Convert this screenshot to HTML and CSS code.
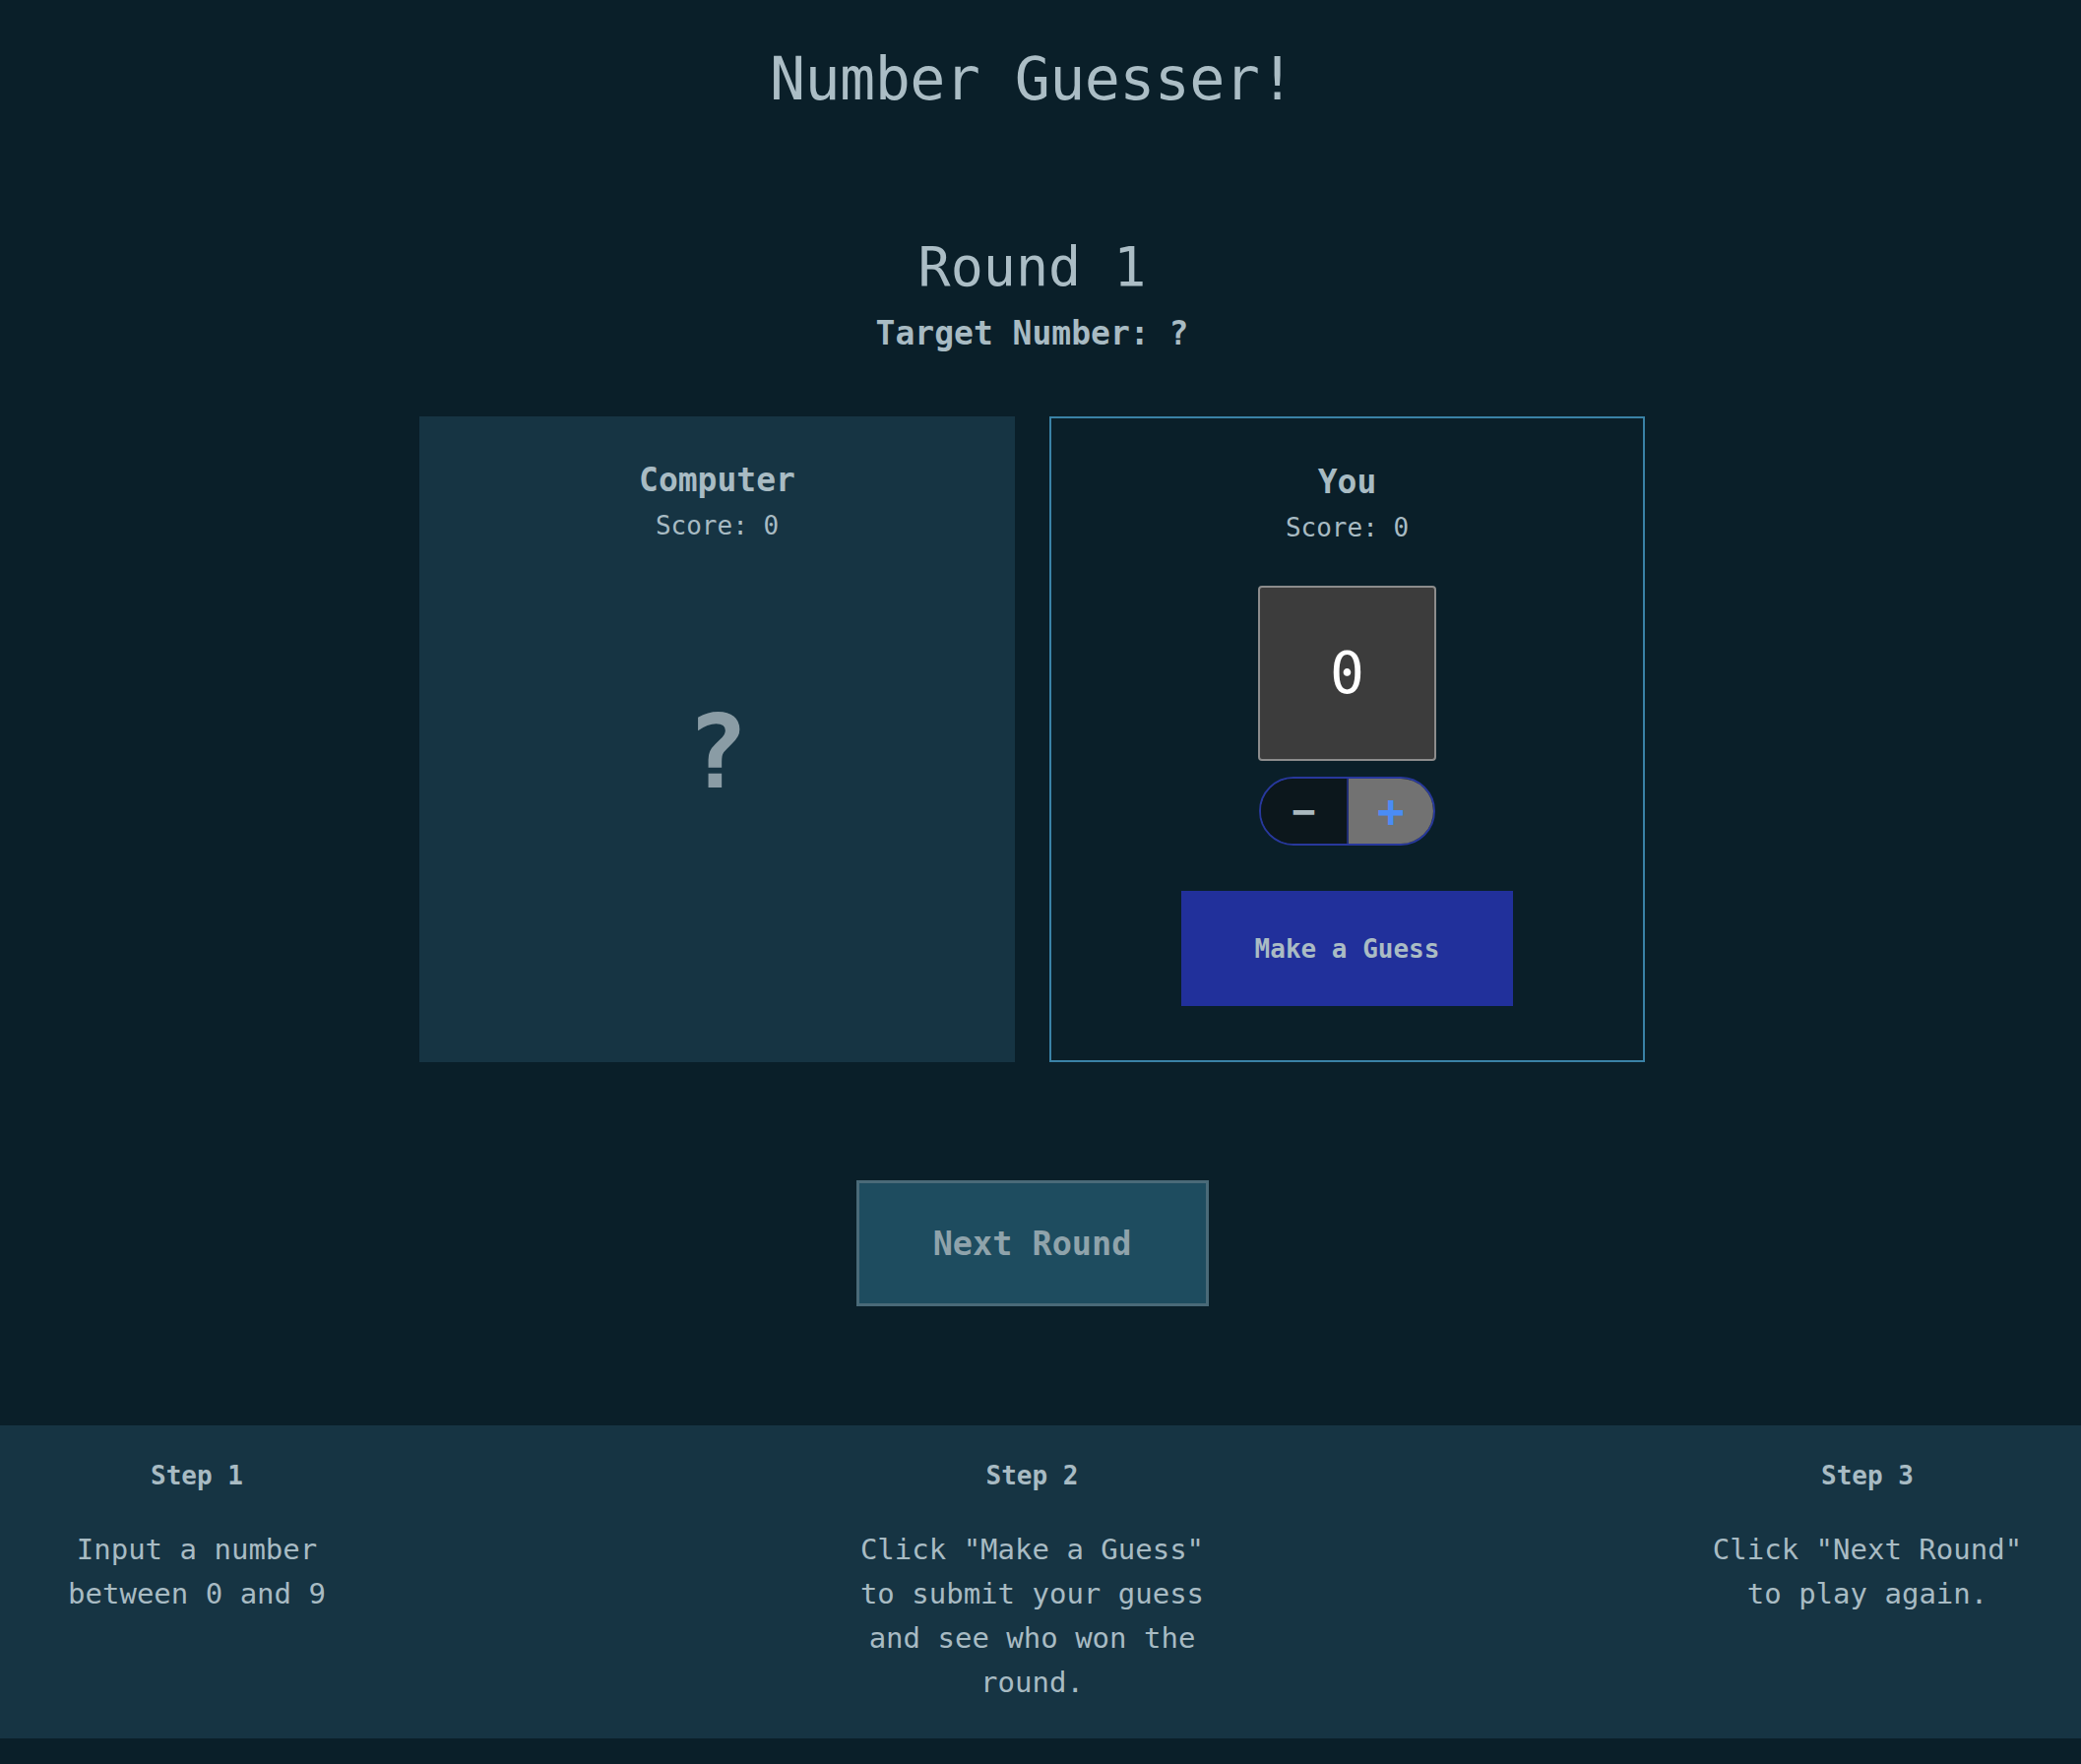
FILE: index.html
```html
<!DOCTYPE html>
<html lang="en">
<head>
<meta charset="utf-8">
<title>Number Guesser!</title>
<link rel="stylesheet" href="styles.css">
</head>
<body>
<main class="main">
  <h1 class="title">Number Guesser!</h1>
  <h2 class="round">Round 1</h2>
  <p class="target">Target Number: ?</p>

  <section class="board">
    <div class="card card-computer">
      <h3 class="player">Computer</h3>
      <p class="score">Score: 0</p>
      <div class="computer-guess">?</div>
    </div>
    <div class="card card-you">
      <h3 class="player">You</h3>
      <p class="score">Score: 0</p>
      <input class="guess-input" type="number" min="0" max="9" value="0">
      <div class="stepper">
        <button class="step-btn step-minus" type="button">−</button>
        <button class="step-btn step-plus" type="button">+</button>
      </div>
      <button class="guess-btn" type="button">Make a Guess</button>
    </div>
  </section>

  <button class="next-btn" type="button">Next Round</button>
</main>

<footer class="footer">
  <div class="steps">
    <div class="step">
      <h4 class="step-title">Step 1</h4>
      <p class="step-text">Input a number between 0 and 9</p>
    </div>
    <div class="step">
      <h4 class="step-title">Step 2</h4>
      <p class="step-text">Click "Make a Guess" to submit your guess and see who won the round.</p>
    </div>
    <div class="step">
      <h4 class="step-title">Step 3</h4>
      <p class="step-text">Click "Next Round" to play again.</p>
    </div>
  </div>
</footer>
</body>
</html>
```

FILE: styles.css
```css
* {
  box-sizing: border-box;
}

body {
  margin: 0;
  background: #0a1f29;
  color: #a8bbc3;
  font-family: "DejaVu Sans Mono", "Liberation Mono", monospace;
}

.main {
  padding-right: 17px;
  display: flex;
  flex-direction: column;
  align-items: center;
  text-align: center;
}

.title {
  margin: 45px 0 0;
  font-size: 60px;
  line-height: 70px;
  font-weight: normal;
  letter-spacing: -0.6px;
  color: #abbdc5;
}

.round {
  margin: 124px 0 0;
  font-size: 55px;
  line-height: 64px;
  font-weight: normal;
  color: #abbdc5;
}

.target {
  margin: 16px 0 0;
  font-size: 33px;
  line-height: 40px;
  font-weight: bold;
}

.board {
  margin-top: 64px;
  display: flex;
  gap: 35px;
}

.card {
  width: 605px;
  height: 656px;
  display: flex;
  flex-direction: column;
  align-items: center;
  padding-top: 45px;
}

.card-computer {
  background: #163443;
}

.card-you {
  border: 2px solid #3a82a6;
  padding-top: 45px;
}

.player {
  margin: 0;
  font-size: 33px;
  line-height: 40px;
  font-weight: bold;
}

.score {
  margin: 10px 0 0;
  font-size: 26px;
  line-height: 32px;
}

.computer-guess {
  margin-top: 159px;
  font-size: 104px;
  line-height: 110px;
  font-weight: bold;
  color: #8a9ca5;
}

.guess-input {
  margin-top: 43px;
  width: 181px;
  height: 178px;
  background: #3c3c3c;
  border: 2px solid #8c8c8c;
  border-radius: 4px;
  color: #ffffff;
  font-family: "DejaVu Sans Mono", monospace;
  font-size: 58px;
  text-align: center;
  padding: 0;
  -moz-appearance: textfield;
}

.guess-input::-webkit-inner-spin-button,
.guess-input::-webkit-outer-spin-button {
  -webkit-appearance: none;
  margin: 0;
}

.stepper {
  margin-top: 16px;
  width: 179px;
  height: 70px;
  display: flex;
  border: 2px solid #28389c;
  border-radius: 35px;
  overflow: hidden;
}

.step-btn {
  flex: 1;
  border: 0;
  margin: 0;
  padding: 0;
  font-family: "DejaVu Sans Mono", monospace;
  font-weight: bold;
  line-height: 1;
}

.step-minus {
  background: #0c171c;
  color: #aab9bf;
  font-size: 40px;
  border-right: 2px solid #1f2d72;
}

.step-plus {
  background: #727272;
  color: #4a8cf5;
  font-size: 46px;
}

.guess-btn {
  margin-top: 46px;
  width: 337px;
  height: 117px;
  border: 0;
  background: #21309b;
  color: #aabcc4;
  font-family: "DejaVu Sans Mono", monospace;
  font-size: 26px;
  font-weight: bold;
}

.next-btn {
  margin-top: 120px;
  width: 358px;
  height: 128px;
  background: #1e4c5f;
  border: 3px solid #4a6a78;
  color: #8fa3ab;
  font-family: "DejaVu Sans Mono", monospace;
  font-size: 33.5px;
  font-weight: bold;
}

.footer {
  margin-top: 121px;
  background: #163443;
  padding: 35px 0 34px;
}

.steps {
  padding-right: 17px;
  display: flex;
  justify-content: space-between;
}

.step {
  width: 400px;
  padding: 0 20px;
  text-align: center;
}

.step-title {
  margin: 0;
  font-size: 26px;
  line-height: 32px;
  font-weight: bold;
}

.step-text {
  margin: 37px 0 0;
  font-size: 29px;
  line-height: 45px;
}
```
